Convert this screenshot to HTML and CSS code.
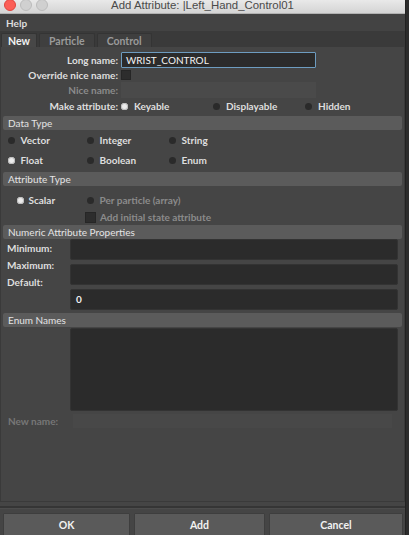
FILE: index.html
```html
<!DOCTYPE html>
<html lang="en">
<head>
  <meta charset="UTF-8">
  <title>Add Attribute</title>
  <link rel="stylesheet" href="styles.css">
</head>
<body>
  <div class="window">
    <div class="titlebar">
      <span class="light red"></span>
      <span class="light"></span>
      <span class="light"></span>
      <span class="title">Add Attribute: |Left_Hand_Control01</span>
    </div>

    <div class="menubar"><span>Help</span></div>

    <div class="tabs">
      <span class="tab active">New</span>
      <span class="tab">Particle</span>
      <span class="tab">Control</span>
    </div>

    <div class="panel">
      <div class="names">
        <div class="row row-long">
          <span class="lbl">Long name:</span>
          <div class="field focus">WRIST_CONTROL</div>
        </div>
        <div class="row row-override">
          <span class="lbl">Override nice name:</span>
          <span class="check"></span>
        </div>
        <div class="row row-long">
          <span class="lbl off">Nice name:</span>
          <div class="field disabled"></div>
        </div>
        <div class="row row-make">
          <span class="lbl">Make attribute:</span>
          <div class="make-opts">
            <span class="opt"><i class="radio on"></i>Keyable</span>
            <span class="opt"><i class="radio"></i>Displayable</span>
            <span class="opt"><i class="radio"></i>Hidden</span>
          </div>
        </div>
      </div>

      <div class="section">Data Type</div>
      <div class="type-grid">
        <span class="opt"><i class="radio"></i>Vector</span>
        <span class="opt"><i class="radio"></i>Integer</span>
        <span class="opt"><i class="radio"></i>String</span>
        <span class="opt"><i class="radio on"></i>Float</span>
        <span class="opt"><i class="radio"></i>Boolean</span>
        <span class="opt"><i class="radio"></i>Enum</span>
      </div>

      <div class="section">Attribute Type</div>
      <div class="attr-type">
        <div class="attr-row">
          <span class="opt scalar"><i class="radio on"></i>Scalar</span>
          <span class="opt off"><i class="radio"></i>Per particle (array)</span>
        </div>
        <div class="attr-check">
          <span class="check big"></span><span class="off">Add initial state attribute</span>
        </div>
      </div>

      <div class="section">Numeric Attribute Properties</div>
      <div class="numeric">
        <div class="num-labels">
          <span>Minimum:</span>
          <span>Maximum:</span>
          <span>Default:</span>
        </div>
        <div class="num-inputs">
          <div class="box"></div>
          <div class="box"></div>
          <div class="box">0</div>
        </div>
      </div>

      <div class="section enum-head">Enum Names</div>
      <div class="enum-list"></div>
      <div class="new-name">
        <span class="lbl-new">New name:</span>
        <div class="new-field"></div>
      </div>
    </div>

    <div class="sep"></div>

    <div class="buttons">
      <button class="btn ok">OK</button>
      <button class="btn add">Add</button>
      <button class="btn cancel">Cancel</button>
    </div>
  </div>
</body>
</html>
```

FILE: styles.css
```css
body {
  margin: 0;
  background: #2c2c2c;
  font-family: Lato, 'Open Sans', sans-serif;
  font-size: 10px;
  font-weight: 700;
  color: #dedede;
  overflow: hidden;
}
.window {
  width: 405px;
  height: 535px;
  background: #454545;
  border-right: 1px solid #222;
}

/* mac title bar */
.titlebar {
  height: 14px;
  background: linear-gradient(#e9e9e9, #d4d4d4);
  border-bottom: 1px solid #b2b2b2;
  box-sizing: border-box;
  display: flex;
  align-items: flex-start;
  padding-left: 4px;
  gap: 4px;
  position: relative;
  overflow: hidden;
}
.light {
  width: 12px;
  height: 12px;
  border-radius: 50%;
  background: #d0d0d0;
  border: 1px solid #bcbcbc;
  box-sizing: border-box;
  margin-top: -1px;
}
.light.red {
  background: #fc5f57;
  border-color: #df463f;
}
.title {
  position: absolute;
  left: 0;
  right: 0;
  top: -1px;
  text-align: center;
  font-family: 'Liberation Sans', sans-serif;
  font-weight: 400;
  font-size: 11.4px;
  color: #4a4a4a;
}

.menubar {
  height: 17px;
  background: #434343;
  display: flex;
  align-items: center;
  padding-left: 6px;
}

.tabs {
  height: 16px;
  background: #3a3a3a;
  display: flex;
  align-items: flex-end;
  padding-left: 1px;
  gap: 2px;
}
.tab {
  height: 14px;
  box-sizing: border-box;
  padding: 0 9px;
  background: #3f3f3f;
  border: 1px solid #343434;
  border-bottom: none;
  border-radius: 2px 2px 0 0;
  color: #9a9a9a;
  display: flex;
  align-items: center;
  justify-content: center;
  font-size: 10.5px;
}
.tab.active {
  background: #474747;
  color: #f2f2f2;
  width: 36px;
}

/* main form */
.panel {
  height: 455px;
  box-sizing: border-box;
  border: 1px solid #3a3a3a;
  border-top: none;
}
.names {
  padding-top: 4px;
}
.row {
  display: flex;
  align-items: center;
}
.row-long { height: 17px; }
.row-override { height: 13px; }
.row-make { height: 16px; }
.lbl {
  width: 120px;
  text-align: right;
  padding-right: 3px;
  box-sizing: border-box;
  flex: none;
}
.off { color: #8b8b8b; }
.field {
  width: 195px;
  height: 16px;
  box-sizing: border-box;
  background: #2b2b2b;
  padding-left: 4px;
  line-height: 14px;
  font-weight: 400;
  color: #f4f4f4;
}
.field.focus {
  border: 1px solid #6d9cc0;
  border-radius: 1px;
}
.field.disabled {
  background: #4a4a4a;
}
.check {
  width: 10px;
  height: 10px;
  background: #2d2d2d;
  border: 1px solid #262626;
  box-sizing: border-box;
  display: inline-block;
}
.check.big {
  width: 11px;
  height: 11px;
  margin-right: 4px;
}
.make-opts {
  display: flex;
}
.make-opts .opt {
  width: 92px;
}
.opt {
  display: flex;
  align-items: center;
}
.radio {
  width: 7px;
  height: 7px;
  border-radius: 50%;
  background: #2a2a2a;
  margin-right: 6px;
  flex: none;
}
.radio.on {
  background: #ececec;
  box-shadow: inset 0 0 0 1px #bdbdbd;
}

.section {
  height: 14px;
  margin: 2px 2px 0;
  background: #5b5b5b;
  border-radius: 2px;
  padding-left: 5px;
  display: flex;
  align-items: center;
  font-weight: 400;
  color: #e4e4e4;
}
.type-grid {
  display: grid;
  grid-template-columns: 79px 82px 1fr;
  grid-auto-rows: 20px;
  padding-left: 6.5px;
  align-items: center;
}
.attr-type {
  padding-top: 3px;
}
.attr-row {
  height: 22px;
  display: flex;
  align-items: center;
}
.attr-row .scalar {
  width: 70px;
  padding-left: 15.5px;
}
.attr-row .scalar .radio { margin-right: 5px; }
.attr-check {
  height: 12px;
  display: flex;
  align-items: center;
  padding-left: 84px;
}

.numeric {
  display: flex;
  padding: 0 6px;
}
.num-labels {
  width: 63px;
  display: flex;
  flex-direction: column;
  line-height: 17px;
  padding-top: 1px;
}
.num-inputs {
  flex: 1;
  display: flex;
  flex-direction: column;
  gap: 4px;
}
.box {
  height: 21px;
  background: #2b2b2b;
  border: 1px solid #333;
  border-radius: 2px;
  box-sizing: border-box;
  padding-left: 5px;
  line-height: 19px;
  color: #f0f0f0;
}
.enum-head {
  margin-top: 3px;
}
.enum-list {
  height: 81px;
  margin: 1px 6px 0 69px;
  background: #2b2b2b;
  border: 1px solid #333;
  border-radius: 2px;
}
.new-name {
  display: flex;
  align-items: center;
  height: 14px;
  margin-top: 3px;
}
.lbl-new {
  width: 72px;
  padding-left: 7px;
  box-sizing: border-box;
  color: #777;
}
.new-field {
  width: 319px;
  height: 14px;
  background: #484848;
}

.sep {
  height: 2px;
  margin-top: 4px;
  background: #353535;
  border-bottom: 1px solid #4c4c4c;
}

.buttons {
  display: flex;
  gap: 4px;
  padding: 4px 2px 0 3px;
}
.btn {
  height: 23px;
  background: #5a5a5a;
  border: 1px solid #3e3e3e;
  border-radius: 1px;
  color: #f2f2f2;
  font-family: inherit;
  font-size: 10.5px;
  font-weight: 700;
  padding: 0;
}
.btn.ok { width: 127px; }
.btn.add { width: 131px; }
.btn.cancel { width: 134px; }
```
